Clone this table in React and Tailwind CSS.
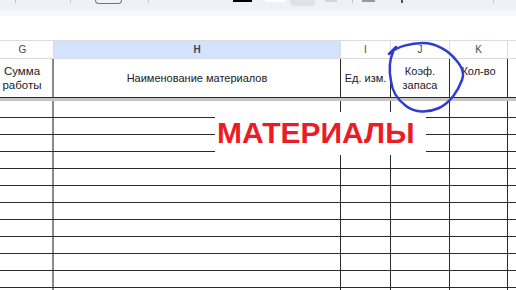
import React from "react";

// Column widths match the spreadsheet grid: G, H, I, J, K, and a sliver of L.
const cols = "grid grid-cols-[54px_287px_50px_59px_58px_1fr]";

function Toolbar() {
  return (
    <div className="flex h-[10px] items-start bg-[#eef2f8]">
      <div className="ml-[15px] h-[3px] w-px bg-[#c4c7c5]" />
      <div className="ml-[54px] h-[3px] w-px bg-[#c4c7c5]" />
      <div className="ml-[24px] h-[4px] w-[27px] rounded-b-[4px] border border-t-0 border-[#747775]" />
      <div className="ml-[26px] h-[3px] w-px bg-[#c4c7c5]" />
      <div className="ml-[84px] h-[2px] w-[19px] bg-black" />
      <div className="ml-[13px] h-[2px] w-[20px] bg-white" />
      <div className="ml-[5px] h-[6px] w-[25px] rounded-b-[4px] bg-[#dfe3e8]" />
      <div className="ml-[10px] h-[2px] w-[12px] bg-[#d3d7dc]" />
      <div className="ml-[15px] h-[3px] w-px bg-[#c4c7c5]" />
      <div className="ml-[9px] h-[2px] w-[13px] bg-[#9a9a9a]" />
      <div className="ml-[26px] h-[3px] w-[2px] bg-[#555]" />
      <div className="ml-[90px] h-[3px] w-px bg-[#c4c7c5]" />
    </div>
  );
}

function ColumnLetters() {
  const cell = "flex items-center justify-center border-r border-[#dadce0] text-[10px] text-[#444746]";
  return (
    <div className={`${cols} h-[19px] border-y border-[#dadce0]`}>
      <div className={`${cell} pr-[8px]`}>G</div>
      <div className={`${cell} bg-[#d3e3fd] font-bold text-[#1f1f1f]`}>H</div>
      <div className={`${cell} text-[#4d7a4d]`}>I</div>
      <div className={cell}>J</div>
      <div className={cell}>K</div>
      <div className="bg-white" />
    </div>
  );
}

function HeaderRow() {
  const cell = "flex items-center justify-center border-r border-[#2a2a2a] text-center leading-[14px]";
  return (
    <div className={`${cols} h-[39px] border-b border-[#2a2a2a] text-[11px] text-[#202124]`}>
      <div className={`${cell} border-r-2 border-[#8a8a8a] pr-[8px] text-[11.5px]`}>
        Сумма
        <br />
        работы
      </div>
      <div className={cell}>Наименование материалов</div>
      <div className={cell}>Ед. изм.</div>
      <div className={cell}>
        Коэф.
        <br />
        запаса
      </div>
      <div className={`${cell} items-start pt-[5px]`}>Кол-во</div>
      <div />
    </div>
  );
}

function BodyRow() {
  const cell = "border-r border-[#2a2a2a]";
  return (
    <div className={`${cols} h-[17px] border-b border-[#2a2a2a]`}>
      <div className="border-r-2 border-[#8a8a8a]" />
      <div className={cell} />
      <div className={cell} />
      <div className={cell} />
      <div className={cell} />
      <div />
    </div>
  );
}

export default function App() {
  const rows = Array.from({ length: 12 }, (_, i) => i);

  return (
    <div className="relative h-[290px] w-[516px] overflow-hidden bg-white font-['Liberation_Sans',Arial,sans-serif]">
      <Toolbar />
      <div className="h-[6px] bg-[#f7f9fc]" />
      <div className="h-[24px] bg-white" />
      <ColumnLetters />
      <HeaderRow />
      <div className="h-[3px] bg-[#c6c6c6]" />
      {rows.map((i) => (
        <BodyRow key={i} />
      ))}

      {/* pasted title label sitting on top of the grid */}
      <div className="absolute left-[215px] top-[112px] h-[43px] w-[211px] bg-white pl-[2px] pt-[6px]">
        <span className="text-[30px] font-bold leading-[30px] text-[#ec1c24]">МАТЕРИАЛЫ</span>
      </div>

      {/* hand-drawn marker around the J column header */}
      <svg className="pointer-events-none absolute left-0 top-0" width="516" height="290" viewBox="0 0 516 290">
        <path
          d="M389 54 L396 47 M392 52 C397 47 410 43 423 43 C436 43 449 51 456 60 C461 66 465 72 462 80 C458 91 450 103 439 108 C428 113 415 113 406 106 C398 100 392 91 391 81 C389 71 389 61 393 52"
          fill="none"
          stroke="#2f3bd1"
          strokeWidth="2.5"
          strokeLinecap="round"
          strokeLinejoin="round"
        />
      </svg>
    </div>
  );
}
